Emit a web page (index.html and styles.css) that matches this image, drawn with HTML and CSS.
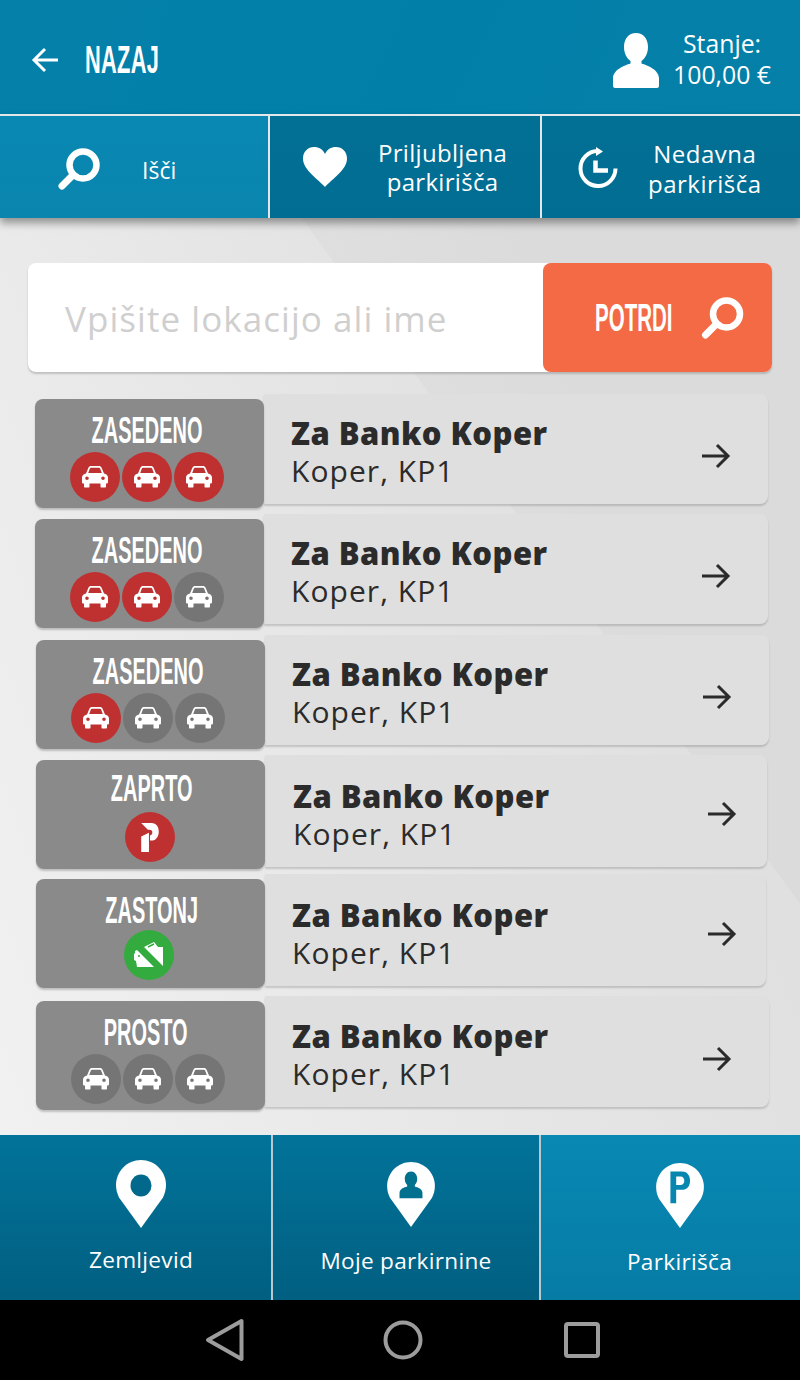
FILE: index.html
```html
<!DOCTYPE html>
<html lang="sl">
<head>
<meta charset="utf-8">
<title>Parkirišča</title>
<link rel="stylesheet" href="styles.css">
</head>
<body>
<svg class="defs" width="0" height="0" aria-hidden="true">
  <symbol id="car" viewBox="0 0 26 22">
    <path fill-rule="evenodd" d="M6.500 1.500C7 .6 7.800 0 9 0h8c1.200 0 2 .6 2.500 1.500L22 7.500c2 .6 4 1.700 4 4v4.500c0 1-.6 1.500-1.500 1.500H24v3c0 .6-.4 1-1 1h-3.500c-.6 0-1-.4-1-1v-3h-11v3c0 .6-.4 1-1 1H3c-.6 0-1-.4-1-1v-3h-.5C.6 17.500 0 17 0 16v-4.500c0-2.300 2-3.400 4-4zM8 2.300 6.200 7h13.600L18 2.300c-.2-.3-.4-.5-.8-.5H8.800c-.4 0-.6.2-.8.500zM5 10.500a1.800 1.800 0 1 0 0 3.600 1.800 1.800 0 0 0 0-3.600zm16 0a1.800 1.800 0 1 0 0 3.600 1.800 1.800 0 0 0 0-3.600z"/>
  </symbol>
  <symbol id="glass" viewBox="0 0 42 42">
    <circle cx="25" cy="17" r="13.500" fill="none" stroke="currentColor" stroke-width="6.500"/>
    <path d="M15 27 4 38" fill="none" stroke="currentColor" stroke-width="7" stroke-linecap="round"/>
  </symbol>
  <symbol id="arrow" viewBox="0 0 30 26">
    <path d="M1 13h26M16 2l11 11-11 11" fill="none" stroke="currentColor" stroke-width="3"/>
  </symbol>
  <symbol id="pin" viewBox="0 0 50 68">
    <path d="M25 0C11 0 0 11.500 0 25c0 4.500 1.200 8.500 3 12.500L25 68l22-30.500c1.800-4 3-8 3-12.500C50 11.500 39 0 25 0z"/>
  </symbol>
</svg>

<div class="screen">
  <header class="top">
    <a class="back">
      <svg class="back-arrow" viewBox="0 0 28 26"><path d="M27 13H3M14 2 3 13l11 11" fill="none" stroke="#fff" stroke-width="3"/></svg>
      <span class="cond back-label">NAZAJ</span>
    </a>
    <div class="balance">
      <svg class="user" viewBox="0 0 46 55"><path fill="#fff" d="M23 0c7.500 0 12 6 12 14 0 6-2.500 11-6.500 14v2.500c6 2 17.500 6 17.500 15V53c0 1-1 2-2 2H2c-1 0-2-1-2-2v-7.500c0-9 11.500-13 17.500-15V28C13.500 25 11 20 11 14 11 6 15.500 0 23 0z"/></svg>
      <div class="balance-text"><div>Stanje:</div><div>100,00 €</div></div>
    </div>
  </header>

  <nav class="tabs">
    <a class="tab tab-search active">
      <svg class="tab-glass"><use href="#glass"/></svg>
      <span class="tab-label single">Išči</span>
    </a>
    <a class="tab tab-fav">
      <svg class="heart" viewBox="0 0 44 40"><path fill="#fff" d="M22 40C15 32 0 23 0 11.500 0 4.500 5 0 11 0c5 0 9 2.500 11 7 2-4.500 6-7 11-7 6 0 11 4.500 11 11.500C44 23 29 32 22 40z"/></svg>
      <span class="tab-label">Priljubljena<br>parkirišča</span>
    </a>
    <a class="tab tab-recent">
      <svg class="clock" viewBox="0 0 40 41"><path d="M19.500 4A17.500 17.500 0 1 0 37.500 21.500" fill="none" stroke="#fff" stroke-width="4"/><path fill="#fff" d="M18 0l7 4.500-7 4.500z"/><path d="M17.500 13.500v10h12.500" fill="none" stroke="#fff" stroke-width="4.500"/></svg>
      <span class="tab-label">Nedavna<br>parkirišča</span>
    </a>
  </nav>

  <main class="content">
    <form class="search">
      <div class="search-input">Vpišite lokacijo ali ime</div>
      <button class="search-btn" type="button">
        <span class="cond btn-label">POTRDI</span>
        <svg class="btn-glass"><use href="#glass"/></svg>
      </button>
    </form>

    <ul class="list">
      <li class="row r1">
        <div class="badge">
          <div class="cond badge-title">ZASEDENO</div>
          <div class="dots">
            <span class="dot red"><svg class="car"><use href="#car"/></svg></span>
            <span class="dot red"><svg class="car"><use href="#car"/></svg></span>
            <span class="dot red"><svg class="car"><use href="#car"/></svg></span>
          </div>
        </div>
        <div class="info">
          <div class="info-text"><div class="name">Za Banko Koper</div><div class="place">Koper, KP1</div></div>
          <svg class="go"><use href="#arrow"/></svg>
        </div>
      </li>
      <li class="row r2">
        <div class="badge">
          <div class="cond badge-title">ZASEDENO</div>
          <div class="dots">
            <span class="dot red"><svg class="car"><use href="#car"/></svg></span>
            <span class="dot red"><svg class="car"><use href="#car"/></svg></span>
            <span class="dot gray"><svg class="car"><use href="#car"/></svg></span>
          </div>
        </div>
        <div class="info">
          <div class="info-text"><div class="name">Za Banko Koper</div><div class="place">Koper, KP1</div></div>
          <svg class="go"><use href="#arrow"/></svg>
        </div>
      </li>
      <li class="row r3">
        <div class="badge">
          <div class="cond badge-title">ZASEDENO</div>
          <div class="dots">
            <span class="dot red"><svg class="car"><use href="#car"/></svg></span>
            <span class="dot gray"><svg class="car"><use href="#car"/></svg></span>
            <span class="dot gray"><svg class="car"><use href="#car"/></svg></span>
          </div>
        </div>
        <div class="info">
          <div class="info-text"><div class="name">Za Banko Koper</div><div class="place">Koper, KP1</div></div>
          <svg class="go"><use href="#arrow"/></svg>
        </div>
      </li>
      <li class="row r4">
        <div class="badge">
          <div class="cond badge-title">ZAPRTO</div>
          <div class="dots">
            <span class="dot red">
              <svg class="sign" viewBox="0 0 17 28"><path fill="#fff" d="M0 0h10c4.500 0 7 3.500 7 8.500S14 17 10 17H8.500v-5c1.500 0 2.500-1.500 2.200-3.500C10.500 7 9.500 6.500 6.500 6.500zM0 13l7.500-3.500V28H0z"/></svg>
            </span>
          </div>
        </div>
        <div class="info">
          <div class="info-text"><div class="name">Za Banko Koper</div><div class="place">Koper, KP1</div></div>
          <svg class="go"><use href="#arrow"/></svg>
        </div>
      </li>
      <li class="row r5">
        <div class="badge">
          <div class="cond badge-title">ZASTONJ</div>
          <div class="dots">
            <span class="dot green">
              <svg class="wallet" viewBox="0 0 30 28"><path fill="#fff" d="M10 6 20 1l4 5h5v19zM1 10l2-1 17 17H3l-1-6-2-1v-6l1-1z"/><path d="M14 6l6-3M4 15h2" stroke="#33ab3e" stroke-width="1.500"/></svg>
            </span>
          </div>
        </div>
        <div class="info">
          <div class="info-text"><div class="name">Za Banko Koper</div><div class="place">Koper, KP1</div></div>
          <svg class="go"><use href="#arrow"/></svg>
        </div>
      </li>
      <li class="row r6">
        <div class="badge">
          <div class="cond badge-title">PROSTO</div>
          <div class="dots">
            <span class="dot gray"><svg class="car"><use href="#car"/></svg></span>
            <span class="dot gray"><svg class="car"><use href="#car"/></svg></span>
            <span class="dot gray"><svg class="car"><use href="#car"/></svg></span>
          </div>
        </div>
        <div class="info">
          <div class="info-text"><div class="name">Za Banko Koper</div><div class="place">Koper, KP1</div></div>
          <svg class="go"><use href="#arrow"/></svg>
        </div>
      </li>
    </ul>
  </main>

  <nav class="bottom">
    <a class="btab b1">
      <span class="pin-wrap">
        <svg class="pin"><use href="#pin"/></svg>
        <svg class="pin-inner" viewBox="0 0 50 68"><ellipse cx="25" cy="25.500" rx="10.500" ry="11" fill="#02688c"/></svg>
      </span>
      <span class="btab-label">Zemljevid</span>
    </a>
    <a class="btab b2">
      <span class="pin-wrap">
        <svg class="pin"><use href="#pin"/></svg>
        <svg class="pin-inner" viewBox="0 0 50 68"><path fill="#02708f" d="M25 10c4 0 6.500 3.500 6.500 7.500 0 3-1 5-2.500 6.500v1.500c3.500 1 8 2.500 8 7V38H13v-5.500c0-4.500 4.500-6 8-7V24c-1.500-1.500-2.500-3.500-2.500-6.500C18.500 13.500 21 10 25 10z"/></svg>
      </span>
      <span class="btab-label">Moje parkirnine</span>
    </a>
    <a class="btab b3 active">
      <span class="pin-wrap">
        <svg class="pin"><use href="#pin"/></svg>
        <svg class="pin-inner" viewBox="0 0 50 68"><path fill="#0786b0" fill-rule="evenodd" d="M15 9h12c5 0 8.500 3.500 8.500 9.500S32 28 27 28h-6v14h-6zm6 5v9h4.500c2.500 0 4-1.800 4-4.500S28 14 25.500 14z"/></svg>
      </span>
      <span class="btab-label">Parkirišča</span>
    </a>
  </nav>

  <footer class="sysbar">
    <svg class="sys sys-back" viewBox="0 0 40 44"><path d="M36.500 3 3 22l33.500 19z" fill="none" stroke="#9c9c9c" stroke-width="4" stroke-linejoin="round"/></svg>
    <svg class="sys sys-home" viewBox="0 0 40 40"><circle cx="20" cy="20" r="17.500" fill="none" stroke="#9c9c9c" stroke-width="4"/></svg>
    <svg class="sys sys-recent" viewBox="0 0 36 36"><rect x="2" y="2" width="32" height="32" rx="2" fill="none" stroke="#9c9c9c" stroke-width="4"/></svg>
  </footer>
</div>
</body>
</html>
```
FILE: styles.css
```css
* { box-sizing: border-box; }
html, body { margin: 0; padding: 0; }
body { width: 800px; height: 1380px; overflow: hidden; font-family: "Open Sans", sans-serif; color: #fff; background: #000; }
.defs { position: absolute; }
.screen { width: 800px; height: 1380px; display: flex; flex-direction: column; }
.cond { font-family: "Liberation Sans Narrow", "Liberation Sans", sans-serif; font-weight: 700; display: inline-block; }

.top { height: 114px; display: flex; align-items: center; justify-content: space-between; padding: 5px 29px 0 31px;
  background: linear-gradient(115deg, #0480a9 0%, #027fa9 55%, #0580a8 100%); }
.back { display: flex; align-items: center; }
.back-arrow { width: 28px; height: 26px; }
.back-label { font-size: 39px; line-height: 40px; margin-left: 26px; width: 74px; white-space: nowrap; transform-origin: left center; transform: scaleX(.56); letter-spacing: .5px; }
.balance { display: flex; align-items: center; gap: 14px; }
.user { width: 46px; height: 55px; margin-top: 2px; }
.balance-text { font-size: 24.800px; line-height: 31px; text-align: center; margin-top: -2px; }

.tabs { height: 104px; display: flex; gap: 2px; padding-top: 2px; background: #e2e8ea; position: relative; z-index: 2; box-shadow: 0 5px 8px rgba(0,0,0,.38); }
.tab { display: flex; align-items: center; background: linear-gradient(#026f95, #016d92); }
.tab.active { background: linear-gradient(#0888b3, #0a85ae); }
.tab-search { width: 268px; padding-left: 58px; }
.tab-fav { width: 270px; padding-left: 33px; }
.tab-recent { width: 258px; flex: 1; padding-left: 36px; }
.tab-glass { width: 42px; height: 42px; color: #fff; margin-top: 3px; }
.heart { width: 44px; height: 40px; flex: none; }
.clock { width: 40px; height: 41px; flex: none; }
.tab-label { font-size: 24px; line-height: 29px; text-align: center; letter-spacing: .25px; }
.tab-search .tab-label { margin-left: 42px; font-size: 23px; letter-spacing: 0; margin-top: 6px; }
.tab-fav .tab-label { margin-left: 31px; margin-top: 0; letter-spacing: .3px; }
.tab-recent .tab-label { margin-left: 30px; margin-top: 4px; line-height: 30px; letter-spacing: .5px; }

.content { height: 917px; padding: 45px 28px 0; position: relative;
  background:
    linear-gradient(54deg, rgba(0,0,0,0) 783px, rgba(0,0,0,.025) 783px),
    linear-gradient(70deg, #f1f1f1 0%, #ebebeb 25%, #e5e5e5 50%, #e0e0e0 75%),
    #e2e2e2; }
.search { height: 109px; display: flex; background: #fff; border-radius: 8px; box-shadow: 0 2px 2px rgba(0,0,0,.18); }
.search-input { flex: 1; padding-left: 37px; font-size: 35px; line-height: 112px; color: #cfcfcf; letter-spacing: 1.050px; white-space: nowrap; }
.search-btn { width: 229px; border: 0; padding: 0; border-radius: 8px; background: #f46a45; color: #fff; display: flex; align-items: center; }
.btn-label { font-size: 38px; line-height: 40px; margin: 1px 0 0 52px; width: 78px; text-align: left; white-space: nowrap; transform-origin: left center; transform: scaleX(.54); }
.btn-glass { width: 43px; height: 42px; margin-left: 28px; color: #fff; }

.list { list-style: none; margin: 0; padding: 0; color: #2b2b2b; }
.row { display: flex; height: 114px; }
.r1 { margin: 22px 4px 0 7px; }
.r2 { margin: 6px 4px 0 7px; }
.r3 { margin: 7px 3px 0 8px; }
.r4 { margin: 6px 5px 0 8px; }
.r5 { margin: 5px 6px 0 8px; }
.r6 { margin: 8px 3px 0 8px; }

.badge { width: 229px; height: 109px; margin-top: 5px; flex: none; background: #8a8a8a; border-radius: 8px; box-shadow: 0 2px 2px rgba(0,0,0,.2); color: #fff; text-align: center; padding-top: 14px; position: relative; z-index: 1; }
.badge-title { font-size: 36px; line-height: 36px; height: 39px; margin-left: -5px; transform: scaleX(.554); white-space: nowrap; }
.r4 .badge-title { margin: -3px 0 0 2px; height: 41px; }
.r5 .badge-title { margin-left: 2px; height: 37px; }
.r6 .badge-title { margin-left: -9px; }
.dots { display: flex; justify-content: center; gap: 2px; padding-right: 6px; }
.r4 .dots { padding-right: 2px; }
.r5 .dots { padding-right: 4px; }
.dot { width: 50px; height: 50px; border-radius: 50%; display: flex; align-items: center; justify-content: center; color: #fff; }
.dot.red { background: #bf3131; }
.dot.gray { background: #757575; }
.dot.green { background: #33ab3e; }
.car { width: 26px; height: 22px; fill: currentColor; }
.sign { width: 18px; height: 29px; }
.wallet { width: 30px; height: 28px; }

.info { flex: 1; height: 110px; background: #dfdfdf; border-radius: 0 8px 8px 0; box-shadow: 0 2px 2px rgba(0,0,0,.16); display: flex; align-items: center; justify-content: space-between; padding: 6px 37px 0 27px; }
.r4 .info, .r5 .info { height: 112px; }
.r6 .info { height: 111px; }
.r4 .info { padding-left: 28px; padding-right: 30px; }
.r5 .info { padding-right: 29px; }
.r4 .info-text, .r5 .info-text { margin-top: 2px; }
.name { font-size: 31px; font-weight: 800; line-height: 38px; letter-spacing: .45px; white-space: nowrap; }
.place { font-size: 30px; line-height: 38px; letter-spacing: 1.050px; white-space: nowrap; }
.go { width: 30px; height: 26px; color: #2b2b2b; margin-top: 8px; }
.r4 .go { margin-top: 0; }
.r5 .go { margin-top: 2px; }

.bottom { height: 165px; display: flex; gap: 2px; background: #b9c8ce; }
.btab { display: flex; flex-direction: column; align-items: center; background: linear-gradient(#02739a, #015f81); padding-top: 25px; }
.btab.active { background: linear-gradient(#0888b3, #067ca5); }
.b1 { width: 271px; padding-left: 11px; }
.b2 { width: 266px; padding-top: 27px; }
.b3 { flex: 1; padding: 28px 0 0 18px; }
.pin-wrap { width: 50px; height: 68px; position: relative; display: block; }
.b2 .pin-wrap, .b3 .pin-wrap { width: 48px; height: 65px; }
.b2 .pin-wrap { margin-left: 10px; }
.pin { width: 100%; height: 100%; fill: #fff; display: block; }
.pin-inner { position: absolute; left: 0; top: 0; width: 100%; height: 100%; }
.btab-label { font-size: 22.600px; line-height: 30px; margin-top: 17px; letter-spacing: .3px; white-space: nowrap; }
.b2 .btab-label, .b3 .btab-label { margin-top: 19px; }

.sysbar { height: 80px; background: #000; display: flex; align-items: center; position: relative; padding-left: 205px; }
.sys { flex: none; }
.sys-back { width: 40px; height: 44px; }
.sys-home { width: 40px; height: 40px; margin-left: 138px; }
.sys-recent { width: 36px; height: 36px; margin-left: 141px; }
```
